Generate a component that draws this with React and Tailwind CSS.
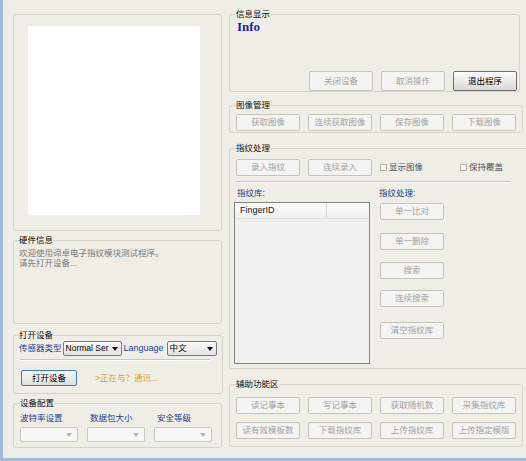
const Btn = ({ children, on, tall, blue, w = "w-[64px]" }) => (
  <div
    className={`${w} ${tall ? "h-[20px]" : blue ? "h-[16px]" : "h-[17px]"} flex shrink-0 items-center justify-center whitespace-nowrap rounded-[2px] border ${
      on
        ? "border-[#6f6f6f] bg-gradient-to-b from-[#fdfdfd] to-[#d9d9d6] text-black"
        : blue
        ? "border-[#3d7db5] bg-gradient-to-b from-[#f7f7f7] to-[#dedede] text-black"
        : "border-[#c6c5bd] bg-[#f4f4f2] text-[#a3a3a3]"
    }`}
  >
    {children}
  </div>
);

const Arrow = ({ gray }) => (
  <svg width="6" height="4" viewBox="0 0 6 4" className="shrink-0">
    <path d="M0 0h6L3 4z" fill={gray ? "#b5b5b5" : "#111"} />
  </svg>
);

const Select = ({ value, w }) => (
  <div
    className={`${w} flex h-[15px] shrink-0 items-center justify-between overflow-hidden whitespace-nowrap rounded-[2px] border border-[#7b7b7b] bg-gradient-to-b from-[#fbfbfb] to-[#e2e2e2] pl-[2px] pr-[3px] text-[8.5px] text-black`}
  >
    <span className="overflow-hidden">{value}</span>
    <Arrow />
  </div>
);

const OffSelect = () => (
  <div className="flex h-[15px] w-[58px] items-center justify-end rounded-[2px] border border-[#c9c9c4] bg-[#f7f7f5] pr-[5px]">
    <Arrow gray />
  </div>
);

const Check = ({ label }) => (
  <div className="flex w-[72px] shrink-0 items-center whitespace-nowrap">
    <div className="h-[7px] w-[7px] border border-[#b3b3ab] bg-[#f8f8f6]" />
    <span className="ml-[2px] text-[#555]">{label}</span>
  </div>
);

const Legend = ({ children }) => <legend className="h-[11px] px-0 leading-[11px] text-[#111]">{children}</legend>;

function LeftCol() {
  return (
    <div className="ml-[10px] flex w-[209px] shrink-0 flex-col">
      <div className="mt-[14px] h-[217px] rounded-[3px] border border-[#d6d4c8] pl-[14px] pt-[11px]">
        <div className="h-[189px] w-[172px] bg-white" />
      </div>

      <fieldset className="mt-[4px] rounded-[3px] border border-[#d6d4c8] px-[5px]">
        <Legend>硬件信息</Legend>
        <div className="h-[77px] pt-[2px] leading-[10px] text-[#7a7a7a]">
          <div>欢迎使用谛卓电子指纹模块测试程序。</div>
          <div>请先打开设备...</div>
        </div>
      </fieldset>

      <fieldset className="mt-[6px] rounded-[3px] border border-[#d6d4c8] px-[5px] pb-[7px]">
        <Legend>打开设备</Legend>
        <div className="flex h-[15px] items-center whitespace-nowrap">
          <span className="shrink-0 text-[#1f3c95]">传感器类型</span>
          <div className="ml-[1px] shrink-0">
            <Select value="Normal Ser" w="w-[59px]" />
          </div>
          <span className="ml-[2px] shrink-0 text-[9px] text-[#1f3c95]">Language</span>
          <div className="ml-[3px] shrink-0">
            <Select value="中文" w="w-[50px]" />
          </div>
        </div>
        <div className="ml-[1px] mt-[3px] w-[190px] border-b border-t border-b-white border-t-[#c9c7bb]" />
        <div className="mt-[9px] flex items-center">
          <div className="ml-[2px]">
            <Btn blue w="w-[56px]">打开设备</Btn>
          </div>
          <span className="ml-[18px] text-[#d9a030]">&gt;正在与？通讯...</span>
        </div>
      </fieldset>

      <fieldset className="mt-[4px] rounded-[3px] border border-[#d6d4c8] px-[6px] pb-[5px]">
        <Legend>设备配置</Legend>
        <div className="flex gap-[9px] whitespace-nowrap pt-[4px] leading-[10px] text-[#1f3c95]">
          <span className="w-[58px]">波特率设置</span>
          <span className="w-[58px] pl-[3px]">数据包大小</span>
          <span className="w-[58px] pl-[3px]">安全等级</span>
        </div>
        <div className="mt-[4px] flex gap-[9px]">
          <OffSelect />
          <OffSelect />
          <OffSelect />
        </div>
      </fieldset>
    </div>
  );
}

function RightCol() {
  const side = [
    ["单一比对", "mt-[1px]"],
    ["单一删除", "mt-[13px]"],
    ["搜索", "mt-[12px]"],
    ["连续搜索", "mt-[11px]"],
    ["清空指纹库", "mt-[15px]"],
  ];
  return (
    <div className="ml-[7px] flex w-[291px] shrink-0 flex-col">
      <fieldset className="mt-[9px] rounded-[3px] border border-[#d6d4c8] pl-[6px] pr-[2px]">
        <Legend>信息显示</Legend>
        <div className="h-[51px] pl-[1px] font-['Liberation_Serif',serif] text-[13px] font-bold leading-[14px] text-[#1b1fb0]">
          Info
        </div>
        <div className="flex justify-end gap-[8px]">
          <Btn tall>关闭设备</Btn>
          <Btn tall>取消操作</Btn>
          <Btn tall on>退出程序</Btn>
        </div>
      </fieldset>

      <fieldset className="mt-[8px] rounded-[3px] border border-[#d6d4c8] px-[6px] pb-[1px]">
        <Legend>图像管理</Legend>
        <div className="flex gap-[8px] pt-[3px]">
          <Btn>获取图像</Btn>
          <Btn>连续获取图像</Btn>
          <Btn>保存图像</Btn>
          <Btn>下载图像</Btn>
        </div>
      </fieldset>

      <fieldset className="mt-[10px] rounded-[3px] border border-[#d6d4c8] px-[6px] pb-[4px]">
        <Legend>指纹处理</Legend>
        <div className="flex items-center gap-[8px] pt-[5px]">
          <Btn>录入指纹</Btn>
          <Btn>连续录入</Btn>
          <Check label="显示图像" />
          <Check label="保持覆盖" />
        </div>
        <div className="mt-[5px] w-[275px] border-b border-t border-b-white border-t-[#c9c7bb]" />
        <div className="mt-[5px] flex leading-[10px] text-[#1f3c95]">
          <span className="w-[143px] pl-[1px]">指纹库:</span>
          <span>指纹处理:</span>
        </div>
        <div className="mt-[4px] flex">
          <div className="-ml-[2px] flex h-[162px] w-[136px] flex-col border border-[#84847f] bg-[#f0f0ee]">
            <div className="flex h-[16px] border-b border-[#e2e2df] bg-gradient-to-b from-[#fbfbfb] to-[#f1f1f0] text-[9px] text-[#222]">
              <div className="flex w-[92px] items-center border-r border-[#d8d8d4] pl-[5px]">FingerID</div>
              <div className="flex-1" />
            </div>
          </div>
          <div className="ml-[10px] flex flex-col">
            {side.map(([t, m]) => (
              <div key={t} className={m}>
                <Btn>{t}</Btn>
              </div>
            ))}
          </div>
        </div>
      </fieldset>

      <fieldset className="mt-[10px] rounded-[3px] border border-[#d6d4c8] px-[6px] pb-[7px]">
        <Legend>辅助功能区</Legend>
        <div className="flex gap-[8px] pt-[7px]">
          <Btn>读记事本</Btn>
          <Btn>写记事本</Btn>
          <Btn>获取随机数</Btn>
          <Btn>采集指纹库</Btn>
        </div>
        <div className="mt-[8px] flex gap-[8px]">
          <Btn>读有效模板数</Btn>
          <Btn>下载指纹库</Btn>
          <Btn>上传指纹库</Btn>
          <Btn>上传指定模版</Btn>
        </div>
      </fieldset>
    </div>
  );
}

export default function App() {
  return (
    <div className="flex h-[461px] w-[526px] overflow-hidden border-b-[3px] border-l-[3px] border-[#a3b9de] bg-[#efeee6] font-['Liberation_Sans','Noto_Sans_CJK_SC',sans-serif] text-[8.5px] leading-[11px] text-black">
      <LeftCol />
      <RightCol />
    </div>
  );
}
